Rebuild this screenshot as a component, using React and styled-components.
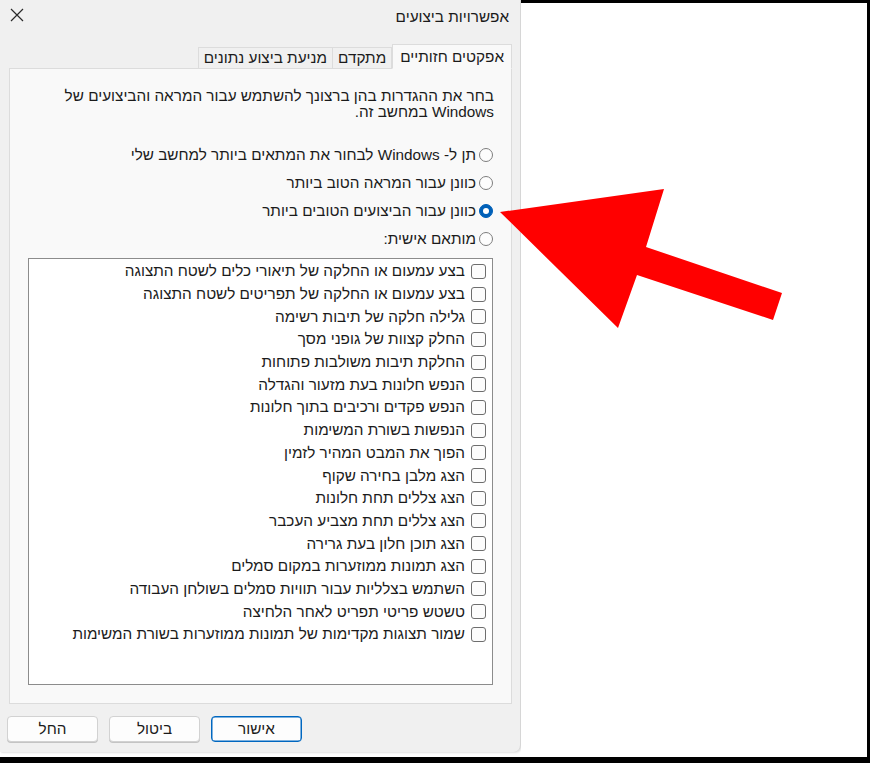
import React from "react";
import styled, { createGlobalStyle } from "styled-components";

const GlobalStyle = createGlobalStyle`
  html, body { margin: 0; padding: 0; background: #ffffff; }
  body { font-family: "Liberation Sans", "DejaVu Sans", sans-serif; color: #1b1b1b; }
`;

const Page = styled.div`
  position: relative;
  width: 870px;
  height: 763px;
  display: grid;
  grid-template-columns: 521px 1fr;
  grid-template-rows: 757px 6px;
  background: #ffffff;
  overflow: hidden;
`;

const Blank = styled.div`
  border-top: 3px solid #000;
  border-right: 3px solid #000;
  background: #fff;
`;

const BottomBar = styled.div`
  grid-column: 1 / span 2;
  background: #000;
`;

const Dialog = styled.div`
  direction: rtl;
  height: 752px;
  background: #f0f0f0;
  border-right: 1px solid #d6d6d6;
  border-bottom-right-radius: 7px;
  box-shadow: 1px 1px 2px rgba(0,0,0,0.12);
  display: flex;
  flex-direction: column;
  box-sizing: border-box;
`;

const TitleBar = styled.div`
  height: 34px;
  display: flex;
  align-items: center;
  justify-content: space-between;
  padding: 0 11px 0 9px;
  box-sizing: border-box;
`;

const Title = styled.div`
  font-size: 15.3px;
  color: #1a1a1a;
`;

const CloseBtn = styled.div`
  width: 16px;
  height: 16px;
  display: flex;
  align-items: center;
  justify-content: center;
  margin-top: -4px;
`;

const TabRow = styled.div`
  display: flex;
  align-items: flex-end;
  margin-top: 10px;
  padding-right: 8px;
  height: 24px;
  position: relative;
  z-index: 1;
`;

const Tab = styled.div`
  box-sizing: border-box;
  padding: 0 ${p => (p.$active ? "7px" : "5px")};
  display: flex;
  align-items: center;
  font-size: 15.3px;
  color: #1b1b1b;
  background: ${p => (p.$active ? "#f9f9f9" : "#f0f0f0")};
  border: 1px solid #dcdcdc;
  border-bottom: ${p => (p.$active ? "1px solid #f9f9f9" : "none")};
  margin-left: ${p => (p.$active ? "0" : "-1px")};
  margin-bottom: ${p => (p.$active ? "-1px" : "0")};
  height: ${p => (p.$active ? "25px" : "21px")};
`;

const Panel = styled.div`
  margin: 0 8px 0 9px;
  height: 636px;
  box-sizing: border-box;
  background: #f9f9f9;
  border: 1px solid #dcdcdc;
  display: flex;
  flex-direction: column;
  padding: 19px 17px 0 17px;
`;

const Description = styled.div`
  font-size: 15.3px;
  line-height: 16px;
  color: #1b1b1b;
`;

const RadioGroup = styled.div`
  display: flex;
  flex-direction: column;
  margin-top: 21px;
  padding-right: 1px;
`;

const RadioRow = styled.div`
  height: 28px;
  display: flex;
  align-items: center;
  gap: 3px;
  font-size: 15.3px;
`;

const RadioCircle = styled.span`
  width: 14px;
  height: 14px;
  box-sizing: border-box;
  border-radius: 50%;
  flex: none;
  display: flex;
  align-items: center;
  justify-content: center;
  background: ${p => (p.$checked ? "#0060b8" : "#fdfdfd")};
  border: 1px solid ${p => (p.$checked ? "#0060b8" : "#7d7d7d")};
  &::after {
    content: "";
    display: ${p => (p.$checked ? "block" : "none")};
    width: 6px;
    height: 6px;
    border-radius: 50%;
    background: #ffffff;
  }
`;

const ListBox = styled.div`
  margin: 5px 1px 0 1px;
  height: 427px;
  box-sizing: border-box;
  background: #ffffff;
  border: 1px solid #8c8c8c;
  padding: 1px 6px 0 0;
  display: flex;
  flex-direction: column;
`;

const CheckRow = styled.div`
  height: 22.7px;
  display: flex;
  align-items: center;
  gap: 6px;
  font-size: 15.3px;
  color: #1b1b1b;
  white-space: nowrap;
`;

const CheckBox = styled.span`
  width: 15px;
  height: 15px;
  box-sizing: border-box;
  border: 1px solid #6e6e6e;
  border-radius: 3px;
  background: #fcfcfc;
  flex: none;
`;

const ButtonRow = styled.div`
  display: flex;
  justify-content: flex-end;
  gap: 11px;
  margin-top: 12px;
  padding-left: 7px;
`;

const Button = styled.div`
  width: 91px;
  height: 26px;
  box-sizing: border-box;
  border-radius: 4px;
  display: flex;
  align-items: center;
  justify-content: center;
  font-size: 15.3px;
  color: #1b1b1b;
  background: #fdfdfd;
  border: 1px solid ${p => (p.$primary ? "#0067c0" : "#d2d2d2")};
  box-shadow: ${p => (p.$primary ? "inset 0 0 0 0.5px #0067c0" : "0 1px 0 #c4c4c4")};
`;

const ArrowLayer = styled.svg`
  position: absolute;
  left: 0;
  top: 0;
  width: 870px;
  height: 763px;
  pointer-events: none;
`;

const radios = [
  { label: "תן ל- Windows לבחור את המתאים ביותר למחשב שלי" },
  { label: "כוונן עבור המראה הטוב ביותר" },
  { label: "כוונן עבור הביצועים הטובים ביותר", checked: true },
  { label: "מותאם אישית:" },
];

const options = [
  "בצע עמעום או החלקה של תיאורי כלים לשטח התצוגה",
  "בצע עמעום או החלקה של תפריטים לשטח התצוגה",
  "גלילה חלקה של תיבות רשימה",
  "החלק קצוות של גופני מסך",
  "החלקת תיבות משולבות פתוחות",
  "הנפש חלונות בעת מזעור והגדלה",
  "הנפש פקדים ורכיבים בתוך חלונות",
  "הנפשות בשורת המשימות",
  "הפוך את המבט המהיר לזמין",
  "הצג מלבן בחירה שקוף",
  "הצג צללים תחת חלונות",
  "הצג צללים תחת מצביע העכבר",
  "הצג תוכן חלון בעת גרירה",
  "הצג תמונות ממוזערות במקום סמלים",
  "השתמש בצלליות עבור תוויות סמלים בשולחן העבודה",
  "טשטש פריטי תפריט לאחר הלחיצה",
  "שמור תצוגות מקדימות של תמונות ממוזערות בשורת המשימות",
];

export default function App() {
  return (
    <>
      <GlobalStyle />
      <Page>
        <Dialog>
          <TitleBar>
            <Title>אפשרויות ביצועים</Title>
            <CloseBtn>
              <svg width="14" height="14" viewBox="0 0 14 14">
                <path d="M1 1 L13 13 M13 1 L1 13" stroke="#2a2a2a" strokeWidth="1.2" fill="none" />
              </svg>
            </CloseBtn>
          </TitleBar>
          <TabRow>
            <Tab $active>אפקטים חזותיים</Tab>
            <Tab>מתקדם</Tab>
            <Tab>מניעת ביצוע נתונים</Tab>
          </TabRow>
          <Panel>
            <Description>
              בחר את ההגדרות בהן ברצונך להשתמש עבור המראה והביצועים של
              <br />
              Windows במחשב זה.
            </Description>
            <RadioGroup>
              {radios.map((r) => (
                <RadioRow key={r.label}>
                  <RadioCircle $checked={r.checked} />
                  <span>{r.label}</span>
                </RadioRow>
              ))}
            </RadioGroup>
            <ListBox>
              {options.map((o) => (
                <CheckRow key={o}>
                  <CheckBox />
                  <span>{o}</span>
                </CheckRow>
              ))}
            </ListBox>
          </Panel>
          <ButtonRow>
            <Button $primary>אישור</Button>
            <Button>ביטול</Button>
            <Button>החל</Button>
          </ButtonRow>
        </Dialog>
        <Blank />
        <BottomBar />
        <ArrowLayer viewBox="0 0 870 763">
          <polygon
            points="500,212 664,189 646,247 782,293 773,320 637,275 618,328"
            fill="#ff0000"
          />
        </ArrowLayer>
      </Page>
    </>
  );
}
